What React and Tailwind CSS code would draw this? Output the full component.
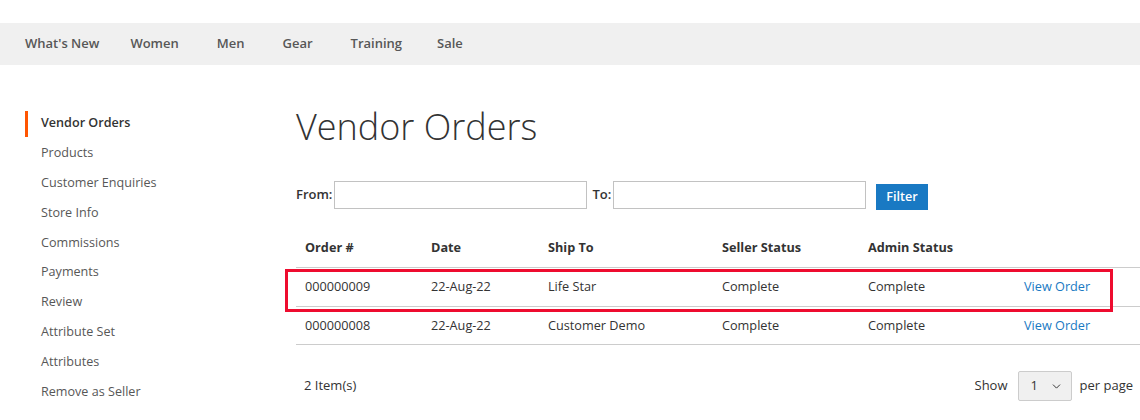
import { ChevronDown } from 'lucide-react';

const navItems = ["What's New", 'Women', 'Men', 'Gear', 'Training', 'Sale'];

const sideItems = [
  'Vendor Orders',
  'Products',
  'Customer Enquiries',
  'Store Info',
  'Commissions',
  'Payments',
  'Review',
  'Attribute Set',
  'Attributes',
  'Remove as Seller',
];

const orders = [
  { id: '000000009', date: '22-Aug-22', shipTo: 'Life Star', seller: 'Complete', admin: 'Complete' },
  { id: '000000008', date: '22-Aug-22', shipTo: 'Customer Demo', seller: 'Complete', admin: 'Complete' },
];

const cols = 'grid grid-cols-[125px_117px_174px_146px_156px_1fr]';

export default function App() {
  return (
    <div className="w-[1140px] h-[420px] overflow-hidden bg-white font-['Open_Sans',sans-serif] text-[#333]">
      <div className="h-[23px]" />

      {/* Top nav */}
      <nav className="h-[42px] bg-[#f0f0f0] flex items-center pl-[25px] gap-[38px] text-[13px] font-semibold text-[#575757]">
        {navItems.map((item, i) => (
          <span key={item} className={i === 0 ? 'mr-[-7px]' : i === 4 ? 'mr-[-3px]' : ''}>
            {item}
          </span>
        ))}
      </nav>

      <div className="flex">
        {/* Sidebar */}
        <aside className="w-[296px] shrink-0 pl-[25px] pt-[44px]">
          <ul className="text-[12.6px]">
            {sideItems.map((item, i) => (
              <li key={item} className="h-[29.8px] flex items-center">
                {i === 0 ? (
                  <span className="h-[26px] flex items-center border-l-[3px] border-[#ff5501] pl-[13px] font-semibold text-[#333]">
                    {item}
                  </span>
                ) : (
                  <span className="pl-[16px] text-[#575757]">{item}</span>
                )}
              </li>
            ))}
          </ul>
        </aside>

        {/* Main */}
        <main className="flex-1 pt-[40px]">
          <h1 className="text-[36px] font-light leading-[44px] text-[#333]">Vendor Orders</h1>

          <div className="mt-[31px] flex items-center text-[13px] font-semibold">
            <label className="mr-[2px]">From:</label>
            <input className="w-[253px] h-[28px] border border-[#c2c2c2] bg-white" />
            <label className="ml-[5px] mr-[2px]">To:</label>
            <input className="w-[253px] h-[28px] border border-[#c2c2c2] bg-white" />
            <button className="ml-[10px] mt-[4px] h-[26px] px-[10px] bg-[#1979c3] text-white text-[12.6px] font-semibold">
              Filter
            </button>
          </div>

          {/* Table */}
          <div className="mt-[18px] text-[12.7px]">
            <div className={`${cols} h-[40px] items-center font-bold border-b border-[#cccccc]`}>
              <div className="pl-[9px]">Order #</div>
              <div className="pl-[10px]">Date</div>
              <div className="pl-[10px]">Ship To</div>
              <div className="pl-[10px]">Seller Status</div>
              <div className="pl-[10px]">Admin Status</div>
              <div />
            </div>
            {orders.map((o, i) => (
              <div key={o.id} className={`${cols} relative h-[38.5px] items-center border-b border-[#cccccc]`}>
                <div className="pl-[9px]">{o.id}</div>
                <div className="pl-[10px]">{o.date}</div>
                <div className="pl-[10px]">{o.shipTo}</div>
                <div className="pl-[10px]">{o.seller}</div>
                <div className="pl-[10px]">{o.admin}</div>
                <div className="pl-[10px] text-[#1979c3]">View Order</div>
                {i === 0 && (
                  <div className="absolute left-[-11px] top-[1px] w-[828px] h-[43px] border-[3px] border-[#ee0c2f] pointer-events-none" />
                )}
              </div>
            ))}
          </div>

          {/* Footer */}
          <div className="mt-[26px] flex items-center justify-between pr-[7px] text-[13px] whitespace-nowrap">
            <span className="pl-[8px]">2 Item(s)</span>
            <div className="flex items-center">
              <span className="mr-[10px]">Show</span>
              <div className="w-[54px] h-[30px] flex items-center justify-between pl-[12px] pr-[8px] bg-[#f0f0f0] border border-[#cccccc] rounded-[2px]">
                <span>1</span>
                <ChevronDown size={13} strokeWidth={1.8} className="text-[#333]" />
              </div>
              <span className="ml-[8px]">per page</span>
            </div>
          </div>
        </main>
      </div>
    </div>
  );
}
